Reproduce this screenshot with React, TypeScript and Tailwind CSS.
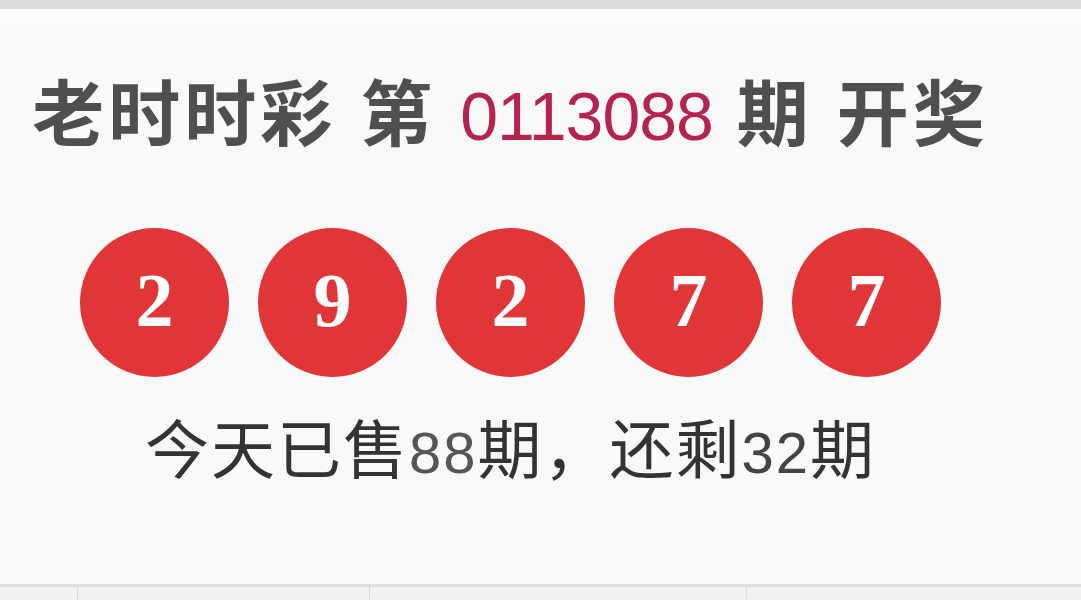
import React from "react";

const balls = ["2", "9", "2", "7", "7"];

export default function App() {
  return (
    <div className="w-[1081px] h-[600px] overflow-hidden bg-[#f9f9f9] flex flex-col">
      {/* top strip */}
      <div className="h-[9px] bg-[#dcdcdc] shrink-0" />
      <div className="h-[18px] bg-gradient-to-b from-[#ffffff] to-[#f9f9f9] shrink-0" />

      <div className="w-[1021px] flex flex-col items-center flex-1">
        {/* title */}
        <h2
          className="mt-[48px] text-[72px] leading-[80px] font-bold text-[#4f4f4f] whitespace-nowrap tracking-[4px]"
          style={{ fontFamily: '"Liberation Sans", "Noto Sans CJK SC", sans-serif' }}
        >
          老时时彩 第{" "}
          <span className="font-normal text-[68px] tracking-[-1px] text-[#b5234f]">0113088</span>{" "}
          期 开奖
        </h2>

        {/* balls */}
        <div className="mt-[72px] flex flex-row gap-[29px]">
          {balls.map((n, i) => (
            <div
              key={i}
              className="w-[149px] h-[149px] rounded-full bg-[#e03638] flex items-center justify-center text-white font-bold text-[76px] leading-none"
              style={{ fontFamily: '"Liberation Serif", serif' }}
            >
              <span className="-mt-[6px]">{n}</span>
            </div>
          ))}
        </div>

        {/* remaining */}
        <p
          className="mt-[38px] text-[64px] leading-[72px] text-[#333333] whitespace-nowrap tracking-[2px]"
          style={{ fontFamily: '"Liberation Sans", "Noto Sans CJK SC", sans-serif' }}
        >
          今天已售<span className="text-[58px] text-[#555]">88</span>期，还剩<span className="text-[58px] text-[#444]">32</span>期
        </p>
      </div>

      {/* bottom table edge */}
      <div className="h-[16px] shrink-0 border-t-[3px] border-[#dedede] bg-[#f1f1f1] flex flex-row">
        <div className="w-[78px] border-r border-[#d8d8d8]" />
        <div className="w-[292px] border-r border-[#d8d8d8]" />
        <div className="w-[377px] border-r border-[#dcdcdc]" />
        <div className="flex-1" />
      </div>
    </div>
  );
}
